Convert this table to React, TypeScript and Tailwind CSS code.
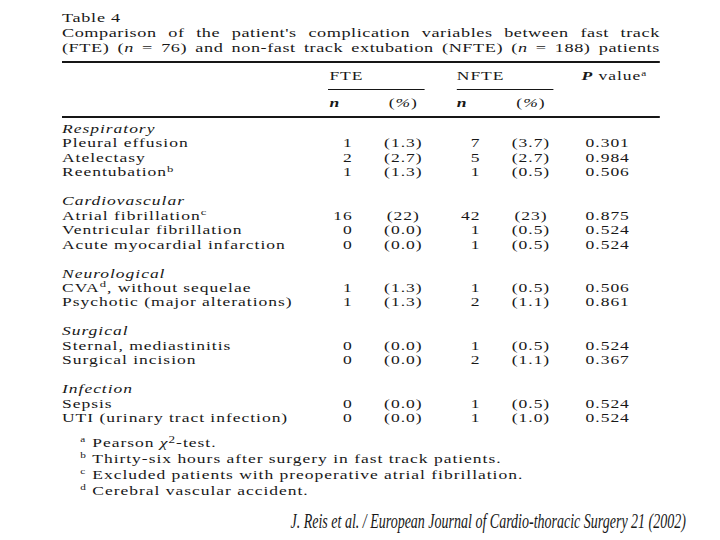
import type { FC, ReactNode } from 'react'

type Row = {
  label: string
  mark?: string
  fte: string
  ftePct: string
  nfte: string
  nftePct: string
  p: string
}

type Group = { title: string; rows: Row[] }

const GROUPS: Group[] = [
  {
    title: 'Respiratory',
    rows: [
      { label: 'Pleural effusion', fte: '1', ftePct: '(1.3)', nfte: '7', nftePct: '(3.7)', p: '0.301' },
      { label: 'Atelectasy', fte: '2', ftePct: '(2.7)', nfte: '5', nftePct: '(2.7)', p: '0.984' },
      { label: 'Reentubation', mark: 'b', fte: '1', ftePct: '(1.3)', nfte: '1', nftePct: '(0.5)', p: '0.506' },
    ],
  },
  {
    title: 'Cardiovascular',
    rows: [
      { label: 'Atrial fibrillation', mark: 'c', fte: '16', ftePct: '(22)', nfte: '42', nftePct: '(23)', p: '0.875' },
      { label: 'Ventricular fibrillation', fte: '0', ftePct: '(0.0)', nfte: '1', nftePct: '(0.5)', p: '0.524' },
      { label: 'Acute myocardial infarction', fte: '0', ftePct: '(0.0)', nfte: '1', nftePct: '(0.5)', p: '0.524' },
    ],
  },
  {
    title: 'Neurological',
    rows: [
      { label: 'CVA', mark: 'd', fte: '1', ftePct: '(1.3)', nfte: '1', nftePct: '(0.5)', p: '0.506' },
      { label: 'Psychotic (major alterations)', fte: '1', ftePct: '(1.3)', nfte: '2', nftePct: '(1.1)', p: '0.861' },
    ],
  },
  {
    title: 'Surgical',
    rows: [
      { label: 'Sternal, mediastinitis', fte: '0', ftePct: '(0.0)', nfte: '1', nftePct: '(0.5)', p: '0.524' },
      { label: 'Surgical incision', fte: '0', ftePct: '(0.0)', nfte: '2', nftePct: '(1.1)', p: '0.367' },
    ],
  },
  {
    title: 'Infection',
    rows: [
      { label: 'Sepsis', fte: '0', ftePct: '(0.0)', nfte: '1', nftePct: '(0.5)', p: '0.524' },
      { label: 'UTI (urinary tract infection)', fte: '0', ftePct: '(0.0)', nfte: '1', nftePct: '(1.0)', p: '0.524' },
    ],
  },
]

const FOOTNOTES: { mark: string; text: ReactNode }[] = [
  {
    mark: 'a',
    text: (
      <>
        Pearson <i>χ</i>
        <sup>2</sup>-test.
      </>
    ),
  },
  { mark: 'b', text: 'Thirty-six hours after surgery in fast track patients.' },
  { mark: 'c', text: 'Excluded patients with preoperative atrial fibrillation.' },
  { mark: 'd', text: 'Cerebral vascular accident.' },
]

// the scanned page is stretched wide: lay out at 427px and scale 1.4x
// label | FTE n | FTE % | NFTE n | NFTE % | P
const COLS = 'grid grid-cols-[190px_17.6px_72.4px_19px_72px_56.1px]'

const Rule: FC = () => <div className="h-[1.5px] bg-[#161616]" />

const DataRow: FC<{ row: Row }> = ({ row }) => (
  <div className={COLS}>
    <div className="whitespace-nowrap">
      {row.label}
      {row.mark && <sup className="text-[9px]">{row.mark}</sup>}
      {row.mark === 'd' && ', without sequelae'}
    </div>
    <div className="text-right">{row.fte}</div>
    <div className="text-center">{row.ftePct}</div>
    <div className="text-right">{row.nfte}</div>
    <div className="text-center">{row.nftePct}</div>
    <div className="pl-[3px]">{row.p}</div>
  </div>
)

export default function App() {
  return (
    <div className="min-h-[540px] w-[720px] overflow-hidden bg-white font-['Liberation_Serif',serif] text-[#181818]">
      <div className="pl-[62px] pt-[10px]">
        <div className="w-[427px] origin-left scale-x-[1.4]">
          <p className="text-[13px] leading-[15px] tracking-[0.5px]">Table 4</p>
          <p className="text-justify text-[13px] leading-[15px] tracking-[0.4px] [text-align-last:justify]">
            Comparison of the patient's complication variables between fast track
          </p>
          <p className="text-justify text-[13px] leading-[15px] tracking-[0.4px] [text-align-last:justify]">
            (FTE) (<i>n</i> = 76) and non-fast track extubation (NFTE) (<i>n</i> = 188) patients
          </p>

          <div className="mt-[6px]">
            <Rule />
          </div>

          <div className="text-[12.5px] tracking-[0.7px]">
            <div className={`${COLS} h-[26px] items-center leading-[14px]`}>
              <div />
              <div className="col-span-2 pl-[1px]">FTE</div>
              <div className="col-span-2 pl-[2px]">NFTE</div>
              <div>
                <b>
                  <i>P</i>
                </b>{' '}
                value<sup className="text-[8px]">a</sup>
              </div>
            </div>
            <div className={COLS}>
              <div />
              <div className="col-span-2 w-[68.6px]">
                <Rule />
              </div>
              <div className="col-span-2 ml-[2px] w-[69.3px]">
                <Rule />
              </div>
              <div />
            </div>
            <div className={`${COLS} h-[26px] items-center leading-[14px]`}>
              <div />
              <div className="pl-[1px] font-bold italic">n</div>
              <div className="text-center">
                (<i>%</i>)
              </div>
              <div className="pl-[2px] font-bold italic">n</div>
              <div className="text-center">
                (<i>%</i>)
              </div>
              <div />
            </div>
            <Rule />

            <div className="pt-[4.5px] leading-[14.45px]">
              {GROUPS.map((g, gi) => (
                <div key={g.title} className={gi < GROUPS.length - 1 ? 'pb-[14.45px]' : ''}>
                  <div className="italic">{g.title}</div>
                  {g.rows.map((r) => (
                    <DataRow key={r.label} row={r} />
                  ))}
                </div>
              ))}
            </div>

            <div className="mt-[10px] pl-[13px] leading-[16px]">
              {FOOTNOTES.map((f) => (
                <div key={f.mark} className="flex">
                  <span className="w-[8.6px] -translate-y-[3px] text-[8px] tracking-normal">{f.mark}</span>
                  <span>{f.text}</span>
                </div>
              ))}
            </div>
          </div>
        </div>
      </div>

      <p className="mt-[10px] pr-[34px] text-right text-[20px] leading-[24px] italic">
        <span className="inline-block origin-right scale-x-[0.7]">
          J. Reis et al. / European Journal of Cardio-thoracic Surgery 21 (2002)
        </span>
      </p>
    </div>
  )
}
